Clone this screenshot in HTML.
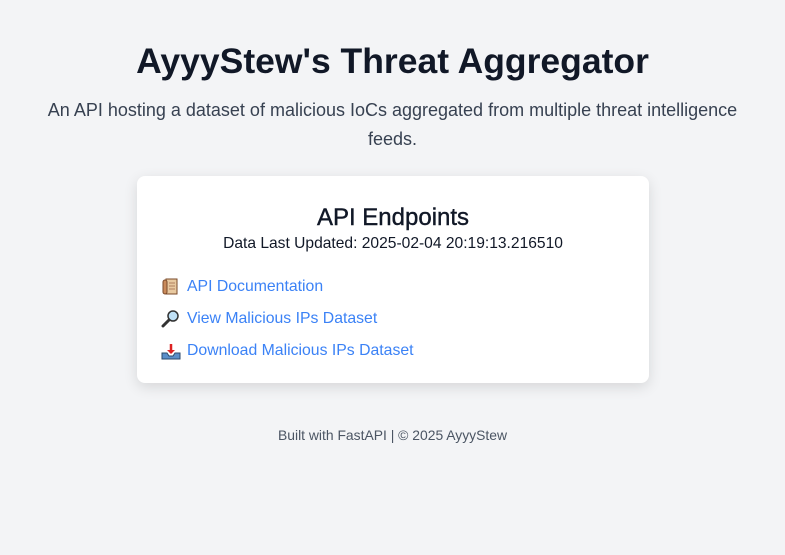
<!DOCTYPE html>
<html><head><style>
body{margin:0;background:#f3f4f6;font-family:"Liberation Sans",sans-serif;color:#111827;width:785px;height:555px;overflow:hidden}
h1{margin:0;position:absolute;top:41px;left:0;width:785px;text-align:center;font-size:35.5px;font-weight:bold;color:#111827}
.sub{position:absolute;top:96px;left:40px;width:705px;text-align:center;font-size:18px;line-height:29px;color:#374151}
.card{position:absolute;left:137px;top:176px;width:512px;height:207px;background:#fff;border-radius:8px;box-shadow:0 4px 14px rgba(0,0,0,.12)}
h2{margin:0;position:absolute;top:28px;width:100%;text-align:center;font-size:24px;font-weight:normal;color:#111827;-webkit-text-stroke:0.4px #111827}
.upd{position:absolute;top:59px;width:100%;text-align:center;font-size:15.6px}
.l{position:absolute;left:24px;font-size:15.8px;color:#3b82f6;display:flex;align-items:center;gap:6px}
.l svg{width:20px;height:20px}
.f{position:absolute;top:427px;width:785px;text-align:center;font-size:13.9px;color:#4b5563}
</style></head><body>
<h1>AyyyStew's Threat Aggregator</h1>
<div class="sub">An API hosting a dataset of malicious IoCs aggregated from multiple threat intelligence feeds.</div>
<div class="card">
<h2>API Endpoints</h2>
<div class="upd">Data Last Updated: 2025-02-04 20:19:13.216510</div>
<div class="l" style="top:101px"><svg viewBox="0 0 20 20"><rect x="5" y="2" width="11" height="15" fill="#e8c9a0" stroke="#7a4a2a"/><rect x="2" y="3" width="4" height="14" rx="2" fill="#c98a5a" stroke="#7a4a2a"/><path d="M8 6h6M8 9h6M8 12h6" stroke="#b08060"/></svg>API Documentation</div>
<div class="l" style="top:133px"><svg viewBox="0 0 20 20"><circle cx="12" cy="7" r="5" fill="#bfe0f5" stroke="#333" stroke-width="1.5"/><path d="M8 11L2 17" stroke="#333" stroke-width="3" stroke-linecap="round"/></svg>View Malicious IPs Dataset</div>
<div class="l" style="top:165px"><svg viewBox="0 0 20 20"><path d="M1 12h5l2 3h4l2-3h5v6H1z" fill="#5b8fc9" stroke="#2d4a6a"/><path d="M10 3v9" stroke="#d22" stroke-width="2.5"/><path d="M6 9l4 4 4-4z" fill="#d22"/></svg>Download Malicious IPs Dataset</div>
</div>
<div class="f">Built with FastAPI | © 2025 AyyyStew</div>
</body></html>
